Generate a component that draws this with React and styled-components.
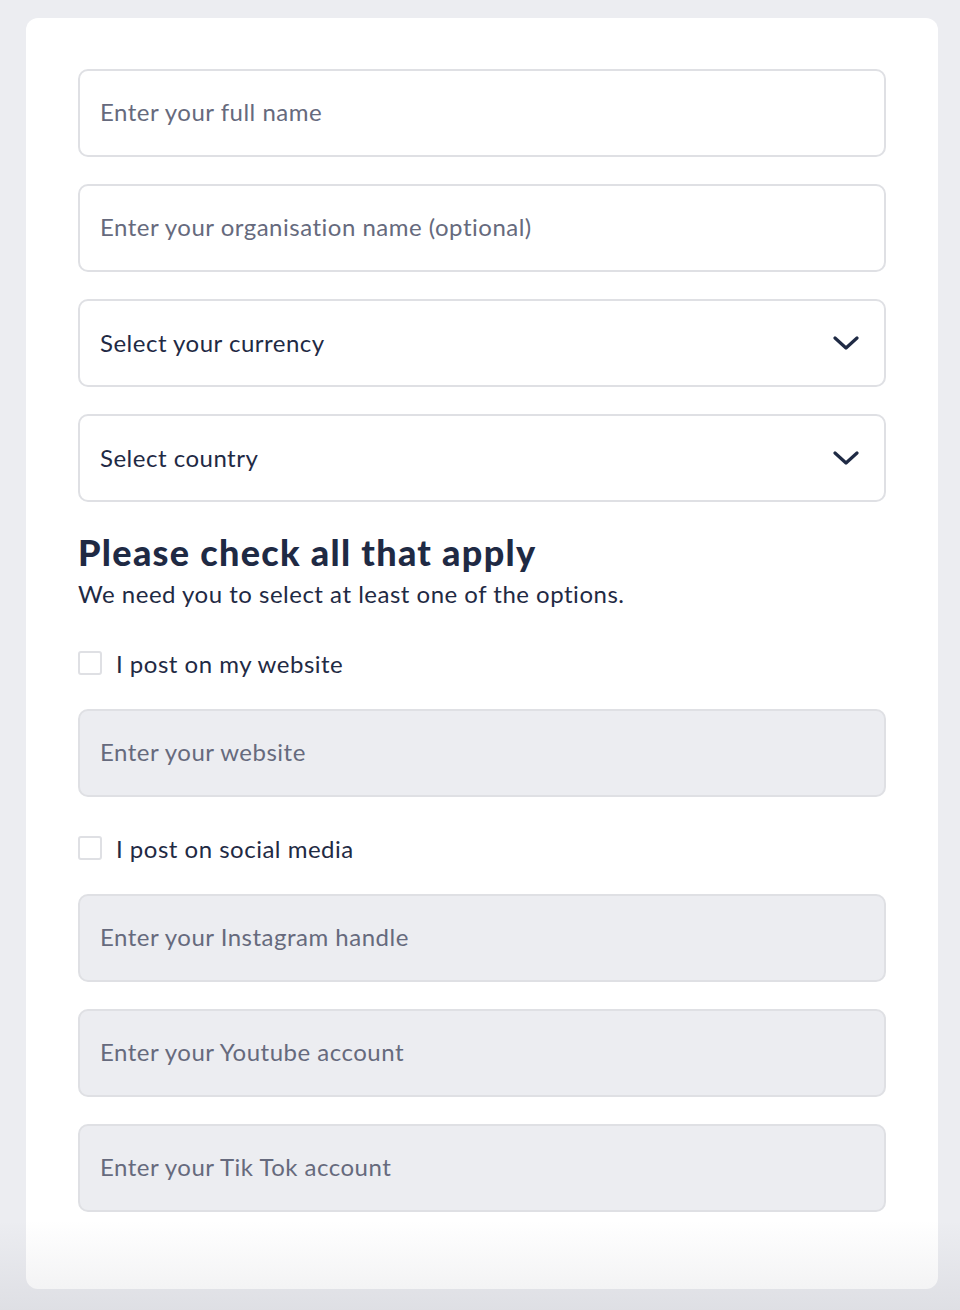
import React from "react";
import styled, { createGlobalStyle } from "styled-components";

const Global = createGlobalStyle`
  html, body { margin: 0; padding: 0; background: #ecedf1; }
  body { font-family: Lato, "Open Sans", sans-serif; }
  * { box-sizing: border-box; }
`;

const Page = styled.div`
  position: relative;
  min-height: 1310px;
  padding: 18px 22px 20px 26px;
  background: #ecedf1;
`;

const Card = styled.form`
  background: #fff;
  border-radius: 12px;
  padding: 51px 52px 77px 52px;
  display: flex;
  flex-direction: column;
`;

const Field = styled.input`
  display: block;
  width: 100%;
  height: 88px;
  border: 2px solid #dfe0e4;
  border-radius: 10px;
  padding: 0 20px 4px;
  font-family: Lato, sans-serif;
  font-size: 24px;
  letter-spacing: 0.5px;
  color: #1f2a44;
  background: ${(p) => (p.$disabled ? "#ecedf1" : "#fff")};
  outline: none;
  margin-bottom: ${(p) => p.$mb ?? 27}px;
  &::placeholder { color: #666a7d; }
`;

const SelectWrap = styled.div`
  position: relative;
  margin-bottom: ${(p) => p.$mb ?? 27}px;
`;

const Select = styled.select`
  appearance: none;
  -webkit-appearance: none;
  display: block;
  width: 100%;
  height: 88px;
  border: 2px solid #dfe0e4;
  border-radius: 10px;
  padding: 0 20px 2px;
  font-family: Lato, sans-serif;
  font-size: 24px;
  letter-spacing: 0.5px;
  color: #1f2a44;
  background: #fff;
  outline: none;
`;

const Chevron = styled.svg`
  position: absolute;
  right: 27px;
  top: 50%;
  transform: translateY(-50%);
  pointer-events: none;
`;

const Heading = styled.h2`
  margin: 0;
  font-family: Lato, sans-serif;
  font-weight: 900;
  font-size: 36px;
  line-height: 44px;
  color: #1f2a44;
  letter-spacing: 1.3px;
`;

const Sub = styled.p`
  margin: 5px 0 39px;
  font-size: 24px;
  line-height: 30px;
  letter-spacing: 0.5px;
  color: #1f2a44;
`;

const CheckRow = styled.label`
  display: flex;
  align-items: center;
  gap: 14px;
  height: 30px;
  margin-bottom: ${(p) => p.$mb}px;
  font-size: 24px;
  letter-spacing: 0.5px;
  color: #1f2a44;
  cursor: pointer;
`;

const Box = styled.input`
  appearance: none;
  -webkit-appearance: none;
  margin: 0;
  width: 24px;
  height: 24px;
  border: 2px solid #dfe0e4;
  border-radius: 3px;
  background: #fff;
`;

const Fade = styled.div`
  position: absolute;
  left: 0;
  right: 0;
  bottom: 0;
  height: 90px;
  pointer-events: none;
  background: linear-gradient(to bottom, rgba(0,0,0,0) 0%, rgba(40,40,60,0.07) 100%);
`;

const ChevronIcon = () => (
  <Chevron width="26" height="16" viewBox="0 0 26 16" fill="none">
    <path d="M2 3l11 10L24 3" stroke="#1f2a44" strokeWidth="3.2" strokeLinecap="round" strokeLinejoin="round" />
  </Chevron>
);

export default function App() {
  return (
    <>
      <Global />
      <Page>
        <Card onSubmit={(e) => e.preventDefault()}>
          <Field placeholder="Enter your full name" />
          <Field placeholder="Enter your organisation name (optional)" />
          <SelectWrap>
            <Select defaultValue="">
              <option value="">Select your currency</option>
            </Select>
            <ChevronIcon />
          </SelectWrap>
          <SelectWrap $mb={28}>
            <Select defaultValue="">
              <option value="">Select country</option>
            </Select>
            <ChevronIcon />
          </SelectWrap>
          <Heading>Please check all that apply</Heading>
          <Sub>We need you to select at least one of the options.</Sub>
          <CheckRow $mb={31}>
            <Box type="checkbox" />
            I post on my website
          </CheckRow>
          <Field $disabled $mb={36} placeholder="Enter your website" />
          <CheckRow $mb={31}>
            <Box type="checkbox" />
            I post on social media
          </CheckRow>
          <Field $disabled placeholder="Enter your Instagram handle" />
          <Field $disabled placeholder="Enter your Youtube account" />
          <Field $disabled $mb={0} placeholder="Enter your Tik Tok account" />
        </Card>
        <Fade />
      </Page>
    </>
  );
}
